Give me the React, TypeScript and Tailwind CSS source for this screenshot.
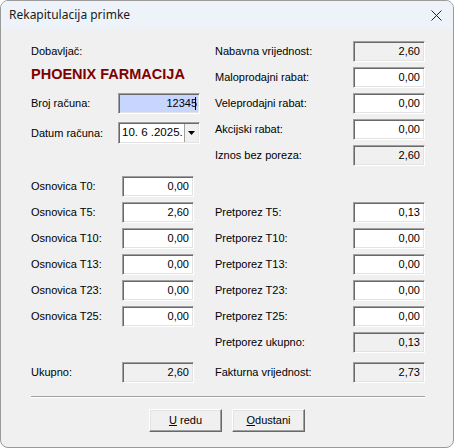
import React from "react";

const sunken =
  "border border-t-[#a0a0a0] border-l-[#a0a0a0] border-b-white border-r-white shadow-[inset_1px_1px_0_#696969,inset_-1px_-1px_0_#e3e3e3]";

function Field({ value, ro, w = "w-[72px]" }: { value: string; ro?: boolean; w?: string }) {
  return (
    <div
      className={`${w} h-[21px] ${sunken} flex items-center justify-end pr-[4px] ${
        ro ? "bg-[#f0f0f0]" : "bg-white"
      }`}
    >
      {value}
    </div>
  );
}

function Right({ label, value, ro }: { label?: string; value?: string; ro?: boolean }) {
  if (!label) return <div className="flex-1" />;
  return (
    <div className="flex-1 flex items-center">
      <span>{label}</span>
      <div className="ml-auto">
        <Field value={value ?? ""} ro={ro} />
      </div>
    </div>
  );
}

function Osnovica({ label, value, ro }: { label?: string; value?: string; ro?: boolean }) {
  return (
    <div className="w-[184px] flex items-center">
      {label && (
        <>
          <span className="w-[91px]">{label}</span>
          <Field value={value ?? ""} ro={ro} />
        </>
      )}
    </div>
  );
}

function Btn({ first, rest }: { first: string; rest: string }) {
  return (
    <button className="w-[73px] h-[23px] bg-[#f0f0f0] border border-t-white border-l-white border-b-[#696969] border-r-[#696969] shadow-[inset_-1px_-1px_0_#a0a0a0,inset_1px_1px_0_#e3e3e3] text-[11px]">
      <span className="underline">{first}</span>
      {rest}
    </button>
  );
}

export default function App() {
  const bottom = [
    ["Osnovica T0:", "0,00", "", ""],
    ["Osnovica T5:", "2,60", "Pretporez T5:", "0,13"],
    ["Osnovica T10:", "0,00", "Pretporez T10:", "0,00"],
    ["Osnovica T13:", "0,00", "Pretporez T13:", "0,00"],
    ["Osnovica T23:", "0,00", "Pretporez T23:", "0,00"],
    ["Osnovica T25:", "0,00", "Pretporez T25:", "0,00"],
  ];

  return (
    <div className="w-[454px] h-[448px] bg-[#f0f0f0] border border-[#9a9a9a] rounded-[8px] overflow-hidden flex flex-col text-[11px] text-black font-['Liberation_Sans',Arial,sans-serif]">
      {/* Title bar */}
      <div className="h-[28px] bg-[#eef3fa] flex items-center pl-[8px] pr-[11px] shrink-0">
        <span className="text-[12px] font-['Noto_Sans',sans-serif] text-[#1a1a1a]">Rekapitulacija primke</span>
        <svg className="ml-auto" width="11" height="11" viewBox="0 0 11 11">
          <path d="M0.5 0.5 L10.5 10.5 M10.5 0.5 L0.5 10.5" stroke="#222" strokeWidth="1" />
        </svg>
      </div>

      <div className="pl-[30px] pr-[28px] pt-[9px] flex flex-col">
        {/* Top section */}
        <div className="h-[26px] flex items-center">
          <div className="w-[184px]">Dobavljač:</div>
          <Right label="Nabavna vrijednost:" value="2,60" ro />
        </div>
        <div className="h-[26px] flex items-center">
          <div className="w-[184px] text-[14.5px] font-bold text-[#800000] -mt-[4px] whitespace-nowrap">
            PHOENIX FARMACIJA
          </div>
          <Right label="Maloprodajni rabat:" value="0,00" />
        </div>
        <div className="h-[26px] flex items-center">
          <div className="w-[184px] flex items-center">
            <span className="w-[87px]">Broj računa:</span>
            <div className={`w-[82px] h-[21px] ${sunken} bg-[#c8d5ff] flex items-center justify-end pr-[3px]`}>
              <span>12345</span>
              <span className="w-px h-[13px] bg-black -ml-[2px]" />
            </div>
          </div>
          <Right label="Veleprodajni rabat:" value="0,00" />
        </div>
        <div className="h-[26px] flex items-center">
          <div className="w-[184px] flex items-center mt-[8px]">
            <span className="w-[87px]">Datum računa:</span>
            <div className={`w-[82px] h-[22px] ${sunken} bg-white flex items-center`}>
              <span className="pl-[3px] text-[11.5px] whitespace-nowrap">10. 6 .2025.</span>
              <div className="ml-auto mr-[1px] w-[14px] h-[18px] bg-[#f0f0f0] border-l border-[#a0a0a0] flex items-center justify-center">
                <svg width="7" height="4" viewBox="0 0 7 4">
                  <path d="M0 0 L7 0 L3.5 4 Z" fill="#000" />
                </svg>
              </div>
            </div>
          </div>
          <Right label="Akcijski rabat:" value="0,00" />
        </div>
        <div className="h-[26px] flex items-center">
          <div className="w-[184px]" />
          <Right label="Iznos bez poreza:" value="2,60" ro />
        </div>

        {/* Bottom section */}
        <div className="mt-[5px] flex flex-col">
          {bottom.map(([l, v, rl, rv]) => (
            <div key={l} className="h-[26px] flex items-center">
              <Osnovica label={l} value={v} />
              <Right label={rl || undefined} value={rv} />
            </div>
          ))}
          <div className="h-[26px] flex items-center">
            <Osnovica />
            <Right label="Pretporez ukupno:" value="0,13" ro />
          </div>
        </div>
        <div className="mt-[4px] h-[26px] flex items-center">
          <Osnovica label="Ukupno:" value="2,60" ro />
          <Right label="Fakturna vrijednost:" value="2,73" ro />
        </div>

        <div className="mt-[11px] h-px bg-[#a0a0a0] border-b border-white box-content" />

        <div className="mt-[11px] flex justify-center gap-[10px] pr-[2px]">
          <Btn first="U" rest=" redu" />
          <Btn first="O" rest="dustani" />
        </div>
      </div>
    </div>
  );
}
